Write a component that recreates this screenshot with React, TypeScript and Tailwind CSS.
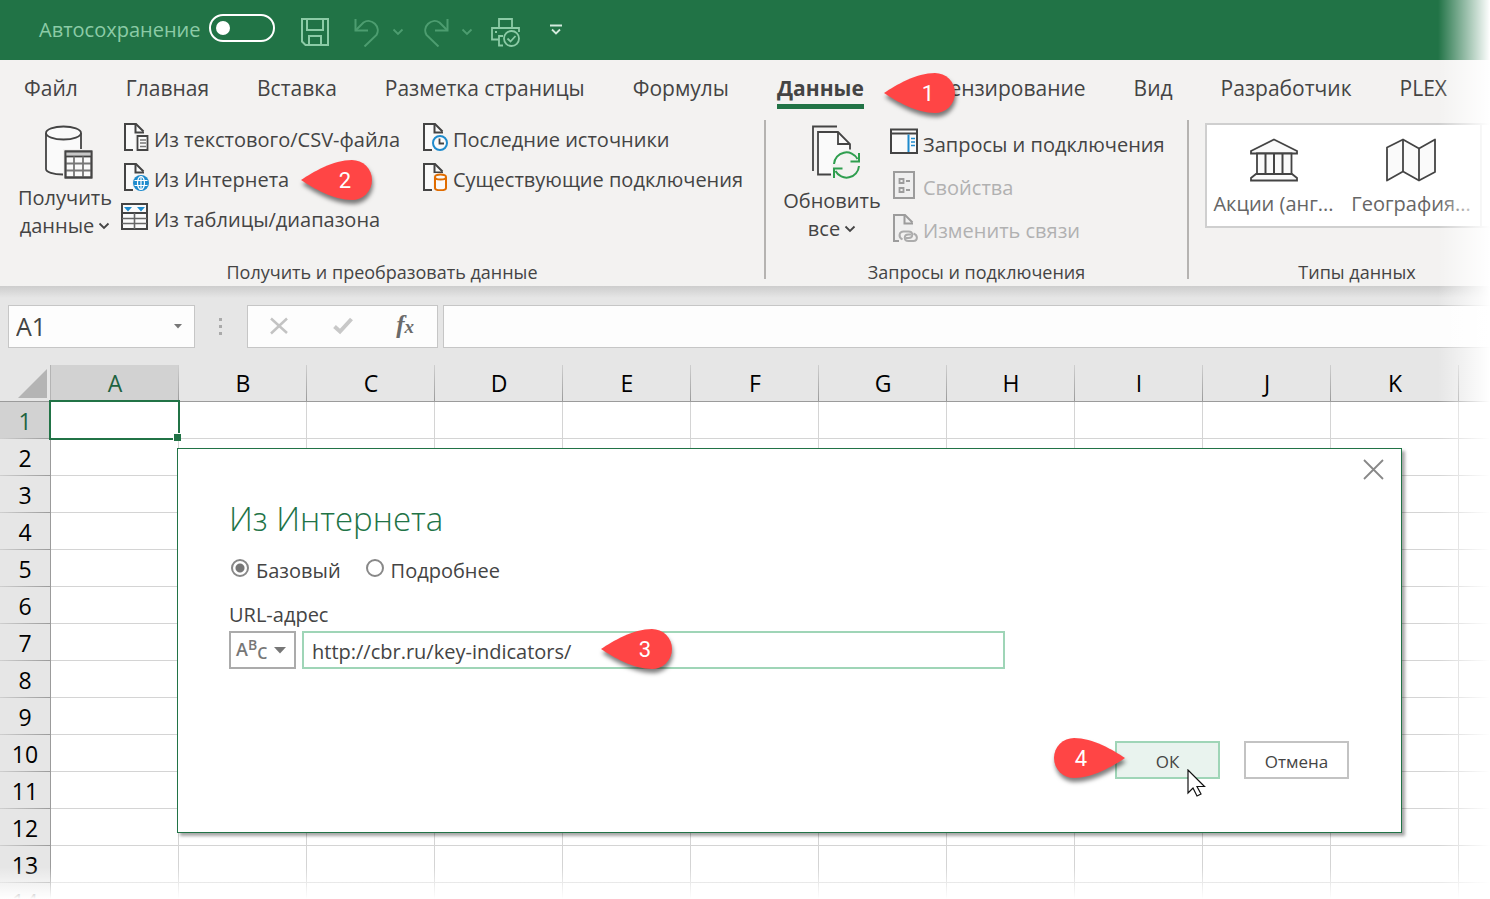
import type { ReactNode } from "react";

const columns = ["A", "B", "C", "D", "E", "F", "G", "H", "I", "J", "K"];
const rows = Array.from({ length: 14 }, (_, i) => i + 1);

function Chevron() {
  return (
    <svg width="12" height="8" viewBox="0 0 12 8" fill="none" stroke="currentColor" strokeWidth="1.8">
      <path d="M1.5 1.5 6 6l4.5-4.5" />
    </svg>
  );
}

function Callout({ n, className, flip = false }: { n: number; className: string; flip?: boolean }) {
  return (
    <span className={`pointer-events-none absolute z-10 h-10 w-18 ${className}`}>
      <svg
        className="absolute inset-0 drop-shadow-[1px_4px_2px_rgba(0,0,0,0.5)]"
        width="72"
        height="40"
        viewBox="0 0 72 40"
        fill="#ff4545"
      >
        {flip ? (
          <path d="M72 20C60 12 40 0 21 0a20 20 0 0 0 0 40C40 40 60 28 72 20Z" />
        ) : (
          <path d="M0 20C12 12 32 0 51 0a20 20 0 0 1 0 40C32 40 12 28 0 20Z" />
        )}
      </svg>
      <span
        className={`absolute inset-y-0 flex w-14 items-center justify-center font-[Roboto,sans-serif] text-[22px] font-normal text-white ${flip ? "left-0" : "right-0"}`}
      >
        {n}
      </span>
    </span>
  );
}

/* ---------- icons ---------- */

function Doc({ stroke = "#444", fill = "#fafafa", children }: { stroke?: string; fill?: string; children?: ReactNode }) {
  return (
    <svg width="28" height="28" viewBox="0 0 28 28" fill="none" className="mb-1.5 shrink-0">
      <path d="M4 1h10l9 9v17H4Z" fill={fill} />
      <path d="M12 27H4V1h11l7.500 7.500" stroke={stroke} strokeWidth="2" />
      <path d="M14.500 1v8.500H23" stroke={stroke} strokeWidth="2" />
      {children}
    </svg>
  );
}

function TextFileIcon() {
  return (
    <Doc>
      <path d="M14 11h14v17H14Z" fill="#f3f2f1" />
      <path d="M16.500 13h10v14h-10Z" fill="#fafafa" stroke="#444" strokeWidth="1.800" />
      <path d="M19 17h6M19 20h6M19 23.500h6" stroke="#777" strokeWidth="1.300" />
    </Doc>
  );
}

function WebIcon() {
  return (
    <Doc>
      <circle cx="20" cy="20" r="9" fill="#f3f2f1" />
      <circle cx="20" cy="20" r="8" fill="#1e8bcd" />
      <g stroke="#fff" strokeWidth="1.200">
        <ellipse cx="20" cy="20" rx="3.500" ry="6.500" />
        <path d="M13.500 17.500h13M13.500 22.500h13M20 13.500v13" />
      </g>
    </Doc>
  );
}

function TableIcon() {
  return (
    <svg width="28" height="28" viewBox="0 0 28 28" fill="none" className="mb-1.5 shrink-0">
      <path d="M1 1h25v25H1Z" fill="#fafafa" stroke="#444" strokeWidth="2" />
      <path d="M1 10h25" stroke="#444" strokeWidth="2" />
      <path d="M13.500 10v16M1 15.500h25M1 20.500h25" stroke="#666" strokeWidth="1.600" />
      <path d="M3 4h8L7 8.500ZM16 4h8l-4 4.500Z" fill="#1e8bcd" />
    </svg>
  );
}

function RecentIcon() {
  return (
    <Doc>
      <circle cx="20" cy="20" r="8.500" fill="#f3f2f1" />
      <circle cx="20" cy="20" r="7" fill="#fafafa" stroke="#1e8bcd" strokeWidth="2" />
      <path d="M19.500 15.500V20.500H24" stroke="#444" strokeWidth="1.800" />
    </Doc>
  );
}

function ExistingIcon() {
  return (
    <Doc>
      <path d="M13 10h15v18H13Z" fill="#f3f2f1" />
      <path d="M15 14v11c0 3 11 3 11 0V14" fill="#fafafa" stroke="#e06c00" strokeWidth="2" />
      <ellipse cx="20.500" cy="14" rx="5.500" ry="2.500" fill="#fafafa" stroke="#e06c00" strokeWidth="2" />
    </Doc>
  );
}

function PaneIcon() {
  return (
    <svg width="28" height="28" viewBox="0 0 28 28" fill="none" className="mb-1.5 shrink-0">
      <path d="M1 1.500h26V25H1Z" fill="#fafafa" stroke="#444" strokeWidth="2" />
      <path d="M1 5.500h26" stroke="#444" strokeWidth="2" />
      <path d="M18.500 6.500V24" stroke="#1e8bcd" strokeWidth="2" />
      <path d="M21 10.500h4M21 14h4M21 17.500h4" stroke="#1e8bcd" strokeWidth="1.600" />
    </svg>
  );
}

function PropertiesIcon() {
  return (
    <svg width="28" height="28" viewBox="0 0 28 28" fill="none" className="mb-1.5 shrink-0" stroke="#9c9c9c">
      <path d="M4 1h20v26H4Z" fill="#efefef" strokeWidth="2" />
      <path d="M9.500 8h4v4h-4ZM9.500 17h4v4h-4Z" strokeWidth="1.800" />
      <path d="M16 10h4M16 19h4" strokeWidth="1.800" />
    </svg>
  );
}

function LinksIcon() {
  return (
    <Doc stroke="#9c9c9c" fill="#efefef">
      <path d="M9 16h19v12H9Z" fill="#f3f2f1" />
      <g stroke="#acacac" strokeWidth="2">
        <path d="M12.500 25.500c-5-3-3-8 1-8h5c5 0 5 6.500 0 6.500h-3" />
        <path d="M23.500 19.500c5 2 4 7.500 0 7.500h-5c-5 0-5-6.500 0-6.500h2.500" />
      </g>
    </Doc>
  );
}

function DatabaseIcon() {
  return (
    <svg width="50" height="54" viewBox="0 0 50 54" fill="none" stroke="#444" strokeWidth="1.800">
      <path d="M2 8v38c3 5 33 5 35 0V8" fill="#fafafa" stroke="none" />
      <path d="M2 8v36c0 3 7 5.500 17 5.500M37 8v16" />
      <ellipse cx="19.500" cy="8" rx="17.500" ry="6.500" fill="#fafafa" />
      <path d="M19 24h31v30H19Z" fill="#f3f2f1" stroke="none" />
      <path d="M21.500 26.500h26v26h-26Z" fill="#fafafa" />
      <path d="M22 27h25v4H22Z" fill="#c8c8c8" stroke="none" />
      <path d="M21.500 31.500h26" />
      <path d="M30 31.500v21M39 31.500v21M21.500 38.500h26M21.500 45.500h26" stroke="#777" />
      <path d="M21.500 26.500h26v26h-26Z" />
    </svg>
  );
}

function RefreshIcon() {
  return (
    <svg width="50" height="54" viewBox="0 0 50 54" fill="none" stroke="#444" strokeWidth="1.800">
      <path d="M2 46V1.500h24" />
      <path d="M7 7h20l12 12v30H7Z" fill="#fafafa" stroke="none" />
      <path d="M20 49.500H7V7h20l12 12v5.500" />
      <path d="M27 7v12h12" />
      <circle cx="35.500" cy="40" r="15" fill="#f3f2f1" stroke="none" />
      <path d="M20 26h9v13h-9Z" fill="#fafafa" stroke="none" />
      <g stroke="#2f9e4f" strokeWidth="2">
        <path d="M23 39a12.500 12.500 0 0 1 23.500-5M48 41a12.500 12.500 0 0 1-23.500 5" />
        <path d="M48 28v8.500h-8.500M23 53v-9.500h8.500" />
      </g>
    </svg>
  );
}

function BankIcon() {
  return (
    <svg width="50" height="44" viewBox="0 0 50 44" fill="#fafafa" stroke="#444" strokeWidth="1.800">
      <path d="M25 1.500 48 13v2.500H2V13Z" />
      <path d="M8 15.500h34.500V36H8Z" />
      <path d="M16.500 15.500V36M25 15.500V36M33.500 15.500V36" strokeWidth="2" />
      <path d="M7 36h36l5 4v2.500H2V40Z" />
    </svg>
  );
}

function MapIcon() {
  return (
    <svg width="52" height="44" viewBox="0 0 52 44" fill="#fafafa" stroke="#444" strokeWidth="1.800" strokeLinejoin="round">
      <path d="M2 9.500 18 1.500l16 9 16-9V34l-16 8.500-16-9-16 9Z" />
      <path d="M18 1.500v32M34 10.500v32" />
    </svg>
  );
}

/* ---------- title bar ---------- */

function TitleBar() {
  return (
    <header className="flex h-15 shrink-0 items-center bg-[#217346] pl-[39px] text-[#8ccba6]">
      <label htmlFor="autosave" className="w-[170px] text-[20px] whitespace-nowrap">
        Автосохранение
      </label>
      <span className="relative mb-1 h-7 w-[66px]">
        <input
          id="autosave"
          type="checkbox"
          role="switch"
          className="block h-7 w-[66px] appearance-none rounded-full border-2 border-white"
        />
        <span className="pointer-events-none absolute top-[7px] left-[7px] size-3.5 rounded-full bg-white" />
      </span>
      <button aria-label="Сохранить" className="ml-[26px] pt-1">
        <svg width="28" height="28" viewBox="0 0 28 28" fill="none" stroke="currentColor" strokeWidth="2">
          <path d="M1 1h26v26H4.500L1 23.500Z" />
          <path d="M6 1v11h16V1M8 27v-9h12v9" />
        </svg>
      </button>
      <button aria-label="Отменить" className="ml-[25px] flex items-center gap-3 pt-1 text-[#4d9d70]">
        <svg width="26" height="29" viewBox="0 0 26 29" fill="none" stroke="currentColor" strokeWidth="2">
          <path d="M1.500 1v11.500H14" />
          <path d="M1.500 12.500 9.500 4.500A9.300 9.300 0 0 1 22.500 17L10.500 28.500" />
        </svg>
        <Chevron />
      </button>
      <button aria-label="Повторить" className="ml-[19px] flex items-center gap-3 pt-1 text-[#4d9d70]">
        <svg width="26" height="29" viewBox="0 0 26 29" fill="none" stroke="currentColor" strokeWidth="2">
          <path d="M24.500 1v11.500H12" />
          <path d="M24.500 12.500 16.500 4.500A9.300 9.300 0 0 0 3.500 17L15.500 28.500" />
        </svg>
        <Chevron />
      </button>
      <button aria-label="Предварительный просмотр и печать" className="ml-[18px] pt-1">
        <svg width="30" height="29" viewBox="0 0 30 29" fill="none" stroke="currentColor" strokeWidth="1.800">
          <path d="M8 10V1h13v9" />
          <path d="M8 21.500H1V10h27v4M12 27.500H8V18h4" />
          <path d="M4 14h2" />
          <circle cx="20.500" cy="20.500" r="7.500" />
          <path d="m16.500 20.500 3 3 5-5.500" />
        </svg>
      </button>
      <button aria-label="Настройка панели быстрого доступа" className="ml-[28px]">
        <svg width="14" height="12" viewBox="0 0 14 12" fill="none" stroke="#d3eadd" strokeWidth="1.800">
          <path d="M1 1.500h12M3 5.500l4 4 4-4" />
        </svg>
      </button>
    </header>
  );
}

/* ---------- ribbon ---------- */

function Tabs() {
  return (
    <nav className="flex h-14 shrink-0 items-center gap-12 bg-[#f3f2f1] pt-0.5 pl-6 text-[21px] whitespace-nowrap">
      <button>Файл</button>
      <button>Главная</button>
      <button>Вставка</button>
      <button>Разметка страницы</button>
      <button>Формулы</button>
      <button className="relative font-bold">
        Данные
        <span className="absolute inset-x-0 -bottom-1 h-[5px] bg-[#217346]" />
        <Callout n={1} className="top-0 -right-[92px]" />
      </button>
      <button>Рецензирование</button>
      <button>Вид</button>
      <button>Разработчик</button>
      <button>PLEX</button>
    </nav>
  );
}

function RibbonButton({ icon, disabled, children }: { icon: ReactNode; disabled?: boolean; children: ReactNode }) {
  return (
    <button disabled={disabled} className="relative flex flex-1 items-center gap-[5px] disabled:text-[#b1b1b1]">
      {icon}
      {children}
    </button>
  );
}

function Ribbon() {
  return (
    <section className="flex h-[170px] shrink-0 overflow-hidden bg-[#f3f2f1] pt-1 pb-[7px] text-[20px] whitespace-nowrap">
      <div className="flex w-[766px] shrink-0 flex-col justify-between border-r-2 border-[#b5b3b1]">
        <div className="flex h-30">
          <button className="ml-[18px] flex w-[94px] flex-col items-center pt-[5px] leading-7">
            <span className="pl-2">
              <DatabaseIcon />
            </span>
            <span className="mt-[5px]">Получить</span>
            <span className="flex items-center gap-1">
              данные <Chevron />
            </span>
          </button>
          <div className="ml-[9px] flex w-[299px] flex-col">
            <RibbonButton icon={<TextFileIcon />}>Из текстового/CSV-файла</RibbonButton>
            <RibbonButton icon={<WebIcon />}>
              Из Интернета
              <Callout n={2} className="top-0 left-[180px]" />
            </RibbonButton>
            <RibbonButton icon={<TableIcon />}>Из таблицы/диапазона</RibbonButton>
          </div>
          <div className="flex h-20 flex-col">
            <RibbonButton icon={<RecentIcon />}>Последние источники</RibbonButton>
            <RibbonButton icon={<ExistingIcon />}>Существующие подключения</RibbonButton>
          </div>
        </div>
        <p className="text-center text-[18px] leading-[14px]">Получить и преобразовать данные</p>
      </div>

      <div className="flex w-[423px] shrink-0 flex-col justify-between border-r-2 border-[#b5b3b1]">
        <div className="flex">
          <button className="ml-[18px] flex w-[96px] flex-col items-center pt-[5px] leading-7">
            <span className="pl-2">
              <RefreshIcon />
            </span>
            <span className="mt-2">Обновить</span>
            <span className="flex items-center gap-1">
              все <Chevron />
            </span>
          </button>
          <div className="ml-[10px] flex h-[132px] flex-col pt-[3px]">
            <RibbonButton icon={<PaneIcon />}>Запросы и подключения</RibbonButton>
            <RibbonButton icon={<PropertiesIcon />} disabled>
              Свойства
            </RibbonButton>
            <RibbonButton icon={<LinksIcon />} disabled>
              Изменить связи
            </RibbonButton>
          </div>
        </div>
        <p className="text-center text-[18px] leading-[14px]">Запросы и подключения</p>
      </div>

      <div className="flex w-[336px] shrink-0 flex-col justify-between pl-4">
        <div className="mt-[3px] flex h-[105px] border-2 border-[#cfcfcf] bg-white text-[#666]">
          <button className="ml-1.5 flex w-[121px] flex-col items-center gap-[7px] pt-[13px]">
            <BankIcon />
            Акции (анг...
          </button>
          <button className="ml-4 flex w-[122px] flex-col items-center gap-[7px] pt-[13px]">
            <MapIcon />
            География...
          </button>
          <span className="ml-2 w-10 border-l-2 border-[#cfcfcf]" />
        </div>
        <p className="pr-4 text-center text-[18px] leading-[14px]">Типы данных</p>
      </div>
    </section>
  );
}

/* ---------- formula bar ---------- */

function FormulaBar() {
  return (
    <section className="flex h-[79px] shrink-0 items-start bg-[linear-gradient(#cdcdcd,#e6e6e6_12px)] pt-[19px]">
      <div className="ml-2 flex h-[43px] w-[187px] items-center border border-[#c6c6c6] bg-[#fdfdfd]">
        <input aria-label="Имя" defaultValue="A1" className="w-full min-w-0 flex-1 pl-[7px] text-[25px] outline-none" />
        <button aria-label="Список имён" className="px-3">
          <svg width="8" height="5" viewBox="0 0 8 5" fill="#777">
            <path d="M0 0h8L4 4.500Z" />
          </svg>
        </button>
      </div>
      <div className="mt-[13px] ml-[24px] flex w-[28px] flex-col gap-1">
        <span className="size-[3px] bg-[#aaa]" />
        <span className="size-[3px] bg-[#aaa]" />
        <span className="size-[3px] bg-[#aaa]" />
      </div>
      <div className="flex h-[43px] w-[191px] items-center justify-between border border-[#c6c6c6] bg-[#fdfdfd] pr-[23px] pb-0.5 pl-[21px]">
        <button aria-label="Отмена ввода">
          <svg width="20" height="18" viewBox="0 0 20 18" fill="none" stroke="#c3c3c3" strokeWidth="2.500">
            <path d="M2 1.500 18 16M18 1.500 2 16.500" />
          </svg>
        </button>
        <button aria-label="Ввод">
          <svg width="20" height="18" viewBox="0 0 20 18" fill="none" stroke="#c8c8c8" strokeWidth="4">
            <path d="m1.500 9.500 5.500 5L18.500 2" />
          </svg>
        </button>
        <button aria-label="Вставить функцию" className="font-['Liberation_Serif',serif] text-[25px] leading-6 font-bold text-[#6a6a6a] italic">
          f<span className="text-[19px]">x</span>
        </button>
      </div>
      <input
        aria-label="Строка формул"
        className="ml-[5px] h-[43px] min-w-0 flex-1 border border-r-0 border-[#c6c6c6] bg-[#fdfdfd] px-2 text-[25px] outline-none"
      />
    </section>
  );
}

/* ---------- sheet ---------- */

function Sheet() {
  return (
    <table className="w-full table-fixed border-separate border-spacing-0 text-[23px] leading-8 text-black">
      <colgroup>
        <col className="w-[51px]" />
        {columns.map((c) => (
          <col key={c} className="w-32" />
        ))}
        <col />
      </colgroup>
      <thead>
        <tr className="h-[37px]">
          <th className="border-r border-b border-r-[#b4b4b4] border-b-[#9b9b9b] bg-[#e6e6e6] p-0">
            <svg className="mr-[3px] ml-auto" width="29" height="29" viewBox="0 0 29 29" fill="#b4b4b4">
              <path d="M29 0v29H0Z" />
            </svg>
          </th>
          {columns.map((c, i) => (
            <th
              key={c}
              className={`border-b border-[#9b9b9b] bg-[linear-gradient(#cfcfcf,#9b9b9b)] bg-[length:1px_100%] bg-right bg-no-repeat p-0 font-normal ${i === 0 ? "bg-[#d2d2d2] text-[#1e6340]" : "bg-[#e6e6e6]"}`}
            >
              {c}
            </th>
          ))}
          <th className="border-b border-[#9b9b9b] bg-[#e6e6e6] p-0" />
        </tr>
      </thead>
      <tbody>
        {rows.map((r) => (
          <tr key={r} className="h-[37px]">
            <th
              className={`border-r border-[#9b9b9b] bg-[linear-gradient(to_right,#cfcfcf,#9b9b9b)] bg-[length:100%_1px] bg-bottom bg-no-repeat p-0 font-normal ${r === 1 ? "bg-[#d2d2d2] text-[#1e6340]" : "bg-[#e6e6e6]"}`}
            >
              {r}
            </th>
            {columns.map((c) => (
              <td key={c} className="relative border-r border-b border-[#d4d4d4] bg-white p-0">
                {r === 1 && c === "A" && (
                  <span className="absolute -inset-0.5 z-10 border-2 border-[#217346]">
                    <span className="absolute -right-[3px] -bottom-[3px] size-2 border-t border-l border-white bg-[#217346]" />
                  </span>
                )}
              </td>
            ))}
            <td className="border-b border-[#d4d4d4] bg-white p-0" />
          </tr>
        ))}
      </tbody>
    </table>
  );
}

function WebDialog() {
  const radio =
    "mb-1.5 size-[18px] appearance-none rounded-full border-2 border-[#888] bg-white checked:bg-[radial-gradient(#777_4px,white_5px)]";
  return (
    <div
      role="dialog"
      aria-labelledby="dialog-title"
      className="absolute top-[83px] right-[88px] left-[177px] z-20 border border-[#217346] bg-white pr-[52px] pb-[53px] pl-[51px] text-[20px] shadow-[3px_3px_3px_rgba(0,0,0,0.35)]"
    >
      <button aria-label="Закрыть" className="absolute top-2.5 right-[17px]">
        <svg width="21" height="21" viewBox="0 0 21 21" fill="none" stroke="#888" strokeWidth="1.800">
          <path d="m1 1 19 19M20 1 1 20" />
        </svg>
      </button>
      <h1 id="dialog-title" className="pt-[46px] text-[33px] leading-12 font-light text-[#217346]">
        Из Интернета
      </h1>
      <div className="mt-3.5 flex h-7 items-center pl-0.5">
        <label className="flex items-center gap-[7px]">
          <input type="radio" name="mode" defaultChecked className={radio} />
          Базовый
        </label>
        <label className="ml-[25px] flex items-center gap-[7px]">
          <input type="radio" name="mode" className={radio} />
          Подробнее
        </label>
      </div>
      <label htmlFor="url" className="mt-4 block leading-7">
        URL-адрес
      </label>
      <div className="relative mt-0.5 flex gap-[6px]">
        <button aria-label="Тип значения" className="flex h-[38px] w-[67px] items-center justify-between border-2 border-[#ababab] pr-2 pl-[5px] text-[#777]">
          <span className="flex font-semibold">
            <span className="text-[18px] leading-7">A</span>
            <span className="text-[14px] leading-5">B</span>
            <span className="pt-1.5 text-[16px] leading-6">C</span>
          </span>
          <svg width="12" height="7" viewBox="0 0 12 7" fill="#777">
            <path d="M0 0h12L6 6.500Z" />
          </svg>
        </button>
        <input
          id="url"
          defaultValue="http://cbr.ru/key-indicators/"
          className="h-[38px] w-[703px] border-2 border-[#9fd5b7] bg-white px-2 pt-0.5 outline-none"
        />
        <Callout n={3} className="-top-0.5 left-[372px]" />
      </div>
      <div className="mt-[72px] flex justify-end gap-6 text-[17px]">
        <button className="relative h-[38px] w-[105px] border-2 border-[#9fd5b7] bg-[#e9f3ee] pt-1">
          ОК
          <Callout n={4} flip className="-top-[5px] -left-16" />
          <svg className="absolute top-[26px] left-[70px]" width="19" height="28" viewBox="0 0 19 28" fill="#fff" stroke="#111" strokeWidth="1.200">
            <path d="M1 1v23l5-5 4 8 4-2-4-7.500h7.500Z" />
          </svg>
        </button>
        <button className="h-[38px] w-[105px] border-2 border-[#c3c3c3] bg-white pt-1">Отмена</button>
      </div>
    </div>
  );
}

export default function App() {
  return (
    <div className="relative flex h-screen flex-col overflow-hidden bg-white font-['Open_Sans','Noto_Sans',sans-serif] text-[#444]">
      <TitleBar />
      <Tabs />
      <Ribbon />
      <FormulaBar />
      <main className="relative min-h-0 flex-1">
        <Sheet />
        <WebDialog />
      </main>
      {/* soft fade along the right and bottom edges */}
      <div className="pointer-events-none absolute inset-y-0 right-0 z-30 w-[52px] bg-linear-to-r from-white/0 to-white" />
      <div className="pointer-events-none absolute inset-x-0 bottom-0 z-30 h-8 bg-linear-to-b from-white/0 to-white" />
    </div>
  );
}
